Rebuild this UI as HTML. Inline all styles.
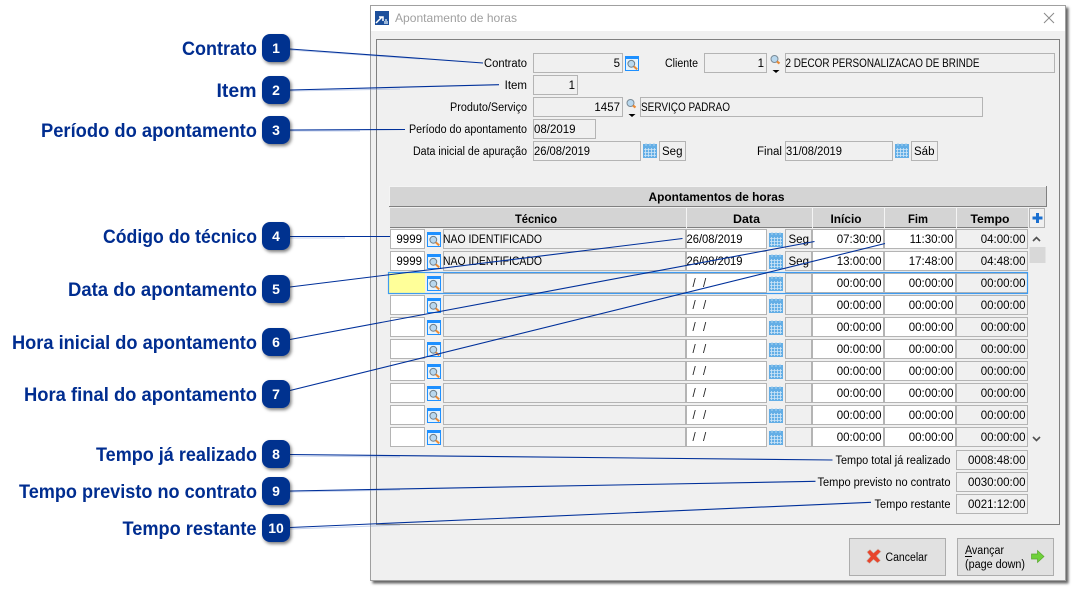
<!DOCTYPE html>
<html><head><meta charset="utf-8"><title>Apontamento de horas</title>
<style>
html,body{margin:0;padding:0;background:#fff;width:1078px;height:593px;overflow:hidden}
svg{display:block}
text{font-family:"Liberation Sans",sans-serif;font-size:11.5px;fill:#000}
.c{font-size:19.5px;font-weight:bold;fill:#002d90;text-anchor:end}
.n{font-size:14px;font-weight:bold;fill:#fff;text-anchor:middle}
.e{text-anchor:end}
.m{text-anchor:middle}
.h{font-weight:bold;text-anchor:middle}
.s{fill:#202020}
.f{fill:#f0f0f0;stroke:#b4b4b4}
.w{fill:#fff;stroke:#b4b4b4}
.l{stroke:#00309a;stroke-width:1.1;fill:none}
.b{fill:#00308f;filter:url(#sh)}
</style></head><body>
<svg width="1078" height="593" viewBox="0 0 1078 593" xmlns="http://www.w3.org/2000/svg">
<defs>
<filter id="sh" x="-30%" y="-30%" width="170%" height="170%"><feDropShadow dx="1.5" dy="2" stdDeviation="1.5" flood-color="#000" flood-opacity=".5"/></filter>
<filter id="ws" x="-2%" y="-2%" width="104%" height="104%"><feDropShadow dx="2.5" dy="2.5" stdDeviation="1.2" flood-color="#000" flood-opacity=".6"/></filter>
<g id="q"><rect x=".5" y=".5" width="13" height="14" fill="#e6f3fc" stroke="#1e90ff"/><rect x="0" y="0" width="14" height="3" fill="#1e90ff"/><circle cx="6.3" cy="7.8" r="3.4" fill="#b9d8ee" stroke="#6f7f8a"/><line x1="8.8" y1="10.4" x2="12.2" y2="13.4" stroke="#ea8a35" stroke-width="2"/></g>
<g id="k"><circle cx="4.5" cy="4" r="3.5" fill="#b9d8ee" stroke="#7a8a96"/><line x1="7" y1="6.5" x2="9.5" y2="8.5" stroke="#ea8a35" stroke-width="2.2"/><path d="M2.5 15h7l-3.5 3z" fill="#000"/></g>
<g id="d"><rect x="0" y="1" width="14" height="14" fill="#63aee6"/><rect x="0" y="1" width="14" height="3" fill="#63aee6"/><path d="M3 0v3M7 0v3M11 0v3" stroke="#a9d2ef"/><path d="M2.500 5v9M5.500 5v9M8.500 5v9M11.500 5v9M1 6.500h12M1 9.500h12M1 12.500h12" stroke="#cfe6f7" stroke-width=".8"/></g>
<g id="r">
<rect class="w" x="390.5" y=".5" width="34" height="19"/>
<use href="#q" x="427" y="3"/>
<rect class="f" x="443.5" y=".5" width="242" height="19"/>
<rect class="w" x="686.5" y=".5" width="80" height="19"/>
<use href="#d" x="769" y="3"/>
<rect class="f" x="785.5" y=".5" width="26" height="19"/>
<rect class="w" x="812.5" y=".5" width="71" height="19"/>
<rect class="w" x="884.5" y=".5" width="71" height="19"/>
<rect class="f" x="956.5" y=".5" width="71" height="19"/>
</g>
</defs>

<!-- window -->
<rect x="370.5" y="5.5" width="695" height="575" fill="#f0f0f0" stroke="#a0a0a0" filter="url(#ws)"/>
<rect x="371" y="6" width="694" height="25" fill="#fff"/>
<rect x="375" y="11" width="14" height="14" fill="#1c4f9c"/>
<path d="M376 23l6-6m-3 0h4v4" stroke="#fff" stroke-width="1.5" fill="none"/><path d="M384 24v-3h1v-2h2v2h1v3z" fill="#9db8d8"/>
<text x="395" y="22" style="font-size:12px;fill:#a0a0a0" textLength="122" lengthAdjust="spacingAndGlyphs">Apontamento de horas</text>
<path d="M1044 13l10 10M1054 13l-10 10" stroke="#8a8a8a" fill="none"/>

<!-- group -->
<rect x="376.5" y="39.5" width="683" height="485" fill="#f0f0f0" stroke="#808080"/>

<!-- form -->
<text class="e" x="527" y="67" textLength="43" lengthAdjust="spacingAndGlyphs">Contrato</text>
<rect class="f" x="533.5" y="53.5" width="89" height="19"/><text class="e" x="620" y="67">5</text>
<use href="#q" x="625" y="56"/>
<text x="665" y="67" textLength="33" lengthAdjust="spacingAndGlyphs">Cliente</text>
<rect class="f" x="704.5" y="53.5" width="62" height="19"/><text class="e" x="764" y="67">1</text>
<use href="#k" x="770" y="55"/>
<rect class="f" x="785.5" y="53.5" width="269" height="19"/><text x="785.5" y="67" textLength="194" lengthAdjust="spacingAndGlyphs">2 DECOR PERSONALIZACAO DE BRINDE</text>

<text class="e" x="527" y="89">Item</text>
<rect class="f" x="533.5" y="75.5" width="44" height="19"/><text class="e" x="575" y="89">1</text>

<text class="e" x="527" y="111" textLength="77" lengthAdjust="spacingAndGlyphs">Produto/Serviço</text>
<rect class="f" x="533.5" y="97.5" width="89" height="19"/><text class="e" x="620" y="111">1457</text>
<use href="#k" x="626" y="99"/>
<rect class="f" x="640.5" y="97.5" width="342" height="19"/><text x="641" y="111" textLength="89" lengthAdjust="spacingAndGlyphs">SERVIÇO PADRAO</text>

<text class="e" x="527" y="133" textLength="118" lengthAdjust="spacingAndGlyphs">Período do apontamento</text>
<rect class="f" x="533.5" y="119.5" width="62" height="19"/><text x="534" y="133">08/2019</text>

<text class="e" x="527" y="155" textLength="114" lengthAdjust="spacingAndGlyphs">Data inicial de apuração</text>
<rect class="f" x="533.5" y="141.5" width="107" height="19"/><text x="534" y="155" textLength="56" lengthAdjust="spacingAndGlyphs">26/08/2019</text>
<use href="#d" x="643" y="143"/>
<rect class="f" x="659.5" y="141.5" width="26" height="19"/><text x="662" y="155">Seg</text>
<text x="757" y="155">Final</text>
<rect class="f" x="785.5" y="141.5" width="107" height="19"/><text x="786" y="155" textLength="56" lengthAdjust="spacingAndGlyphs">31/08/2019</text>
<use href="#d" x="895" y="143"/>
<rect class="f" x="911.5" y="141.5" width="26" height="19"/><text x="914" y="155">Sáb</text>

<!-- table header -->
<rect x="389.5" y="186.5" width="657" height="20" fill="#d4d4d4" stroke="#808080"/>
<path d="M389.5 206V186.5H1046" stroke="#f4f4f4" fill="none"/>
<text class="h" x="716.5" y="201" textLength="136" lengthAdjust="spacingAndGlyphs">Apontamentos de horas</text>
<rect x="390" y="208" width="638" height="20" fill="#d4d4d4"/>
<line x1="390" y1="227.5" x2="1028" y2="227.5" stroke="#808080"/>
<path d="M686.5 208v20M812.5 208v20M884.5 208v20M956.5 208v20" stroke="#f4f4f4"/>
<text class="h" x="536" y="223" textLength="42" lengthAdjust="spacingAndGlyphs">Técnico</text>
<text class="h" x="746.5" y="223" textLength="27" lengthAdjust="spacingAndGlyphs">Data</text>
<text class="h" x="846" y="223" textLength="31" lengthAdjust="spacingAndGlyphs">Início</text>
<text class="h" x="918" y="223" textLength="20" lengthAdjust="spacingAndGlyphs">Fim</text>
<text class="h" x="990" y="223" textLength="39" lengthAdjust="spacingAndGlyphs">Tempo</text>
<rect x="1029.5" y="208.5" width="15" height="19" fill="#f0f0f0" stroke="#b4b4b4"/>
<path d="M1037.5 213v10M1032.5 218h10" stroke="#1a6fd0" stroke-width="3"/>
<path d="M1033 241l3.500-3.500 3.500 3.500" stroke="#505050" stroke-width="1.6" fill="none"/>
<rect x="1029.5" y="247" width="16" height="16" fill="#d8d8d8"/>
<path d="M1033 437l3.500 3.500 3.500-3.500" stroke="#505050" stroke-width="1.6" fill="none"/>

<!-- rows -->
<use href="#r" y="229"/><use href="#r" y="251"/><use href="#r" y="273"/><use href="#r" y="295"/><use href="#r" y="317"/>
<use href="#r" y="339"/><use href="#r" y="361"/><use href="#r" y="383"/><use href="#r" y="405"/><use href="#r" y="427"/>
<rect x="389" y="273" width="36" height="20" fill="#ffff99"/>
<rect x="388.5" y="272.5" width="639" height="21" fill="none" stroke="#3f9bf0" stroke-width="1.2"/>

<text class="e" x="422" y="243">9999</text><text x="443" y="243" textLength="99" lengthAdjust="spacingAndGlyphs">NAO IDENTIFICADO</text><text x="686.5" y="243" textLength="56" lengthAdjust="spacingAndGlyphs">26/08/2019</text><text x="788.5" y="243">Seg</text><text class="e" x="881.5" y="243">07:30:00</text><text class="e" x="953.5" y="243">11:30:00</text><text class="e" x="1025.5" y="243">04:00:00</text>
<text class="e" x="422" y="265">9999</text><text x="443" y="265" textLength="99" lengthAdjust="spacingAndGlyphs">NAO IDENTIFICADO</text><text x="686.5" y="265" textLength="56" lengthAdjust="spacingAndGlyphs">26/08/2019</text><text x="788.5" y="265">Seg</text><text class="e" x="881.5" y="265">13:00:00</text><text class="e" x="953.5" y="265">17:48:00</text><text class="e" x="1025.5" y="265">04:48:00</text>

<text class="s" x="692.5" y="287">/</text><text class="s" x="703" y="287">/</text><text class="e" x="881.5" y="287">00:00:00</text><text class="e" x="953.5" y="287">00:00:00</text><text class="e" x="1025.5" y="287">00:00:00</text>
<text class="s" x="692.5" y="309">/</text><text class="s" x="703" y="309">/</text><text class="e" x="881.5" y="309">00:00:00</text><text class="e" x="953.5" y="309">00:00:00</text><text class="e" x="1025.5" y="309">00:00:00</text>
<text class="s" x="692.5" y="331">/</text><text class="s" x="703" y="331">/</text><text class="e" x="881.5" y="331">00:00:00</text><text class="e" x="953.5" y="331">00:00:00</text><text class="e" x="1025.5" y="331">00:00:00</text>
<text class="s" x="692.5" y="353">/</text><text class="s" x="703" y="353">/</text><text class="e" x="881.5" y="353">00:00:00</text><text class="e" x="953.5" y="353">00:00:00</text><text class="e" x="1025.5" y="353">00:00:00</text>
<text class="s" x="692.5" y="375">/</text><text class="s" x="703" y="375">/</text><text class="e" x="881.5" y="375">00:00:00</text><text class="e" x="953.5" y="375">00:00:00</text><text class="e" x="1025.5" y="375">00:00:00</text>
<text class="s" x="692.5" y="397">/</text><text class="s" x="703" y="397">/</text><text class="e" x="881.5" y="397">00:00:00</text><text class="e" x="953.5" y="397">00:00:00</text><text class="e" x="1025.5" y="397">00:00:00</text>
<text class="s" x="692.5" y="419">/</text><text class="s" x="703" y="419">/</text><text class="e" x="881.5" y="419">00:00:00</text><text class="e" x="953.5" y="419">00:00:00</text><text class="e" x="1025.5" y="419">00:00:00</text>
<text class="s" x="692.5" y="441">/</text><text class="s" x="703" y="441">/</text><text class="e" x="881.5" y="441">00:00:00</text><text class="e" x="953.5" y="441">00:00:00</text><text class="e" x="1025.5" y="441">00:00:00</text>

<!-- totals -->
<text class="e" x="950.5" y="464" textLength="115" lengthAdjust="spacingAndGlyphs">Tempo total já realizado</text>
<rect class="f" x="956.5" y="450.5" width="71" height="19"/><text class="e" x="1025.5" y="464">0008:48:00</text>
<text class="e" x="950.5" y="486" textLength="133" lengthAdjust="spacingAndGlyphs">Tempo previsto no contrato</text>
<rect class="f" x="956.5" y="472.5" width="71" height="19"/><text class="e" x="1025.5" y="486">0030:00:00</text>
<text class="e" x="950.5" y="508" textLength="76" lengthAdjust="spacingAndGlyphs">Tempo restante</text>
<rect class="f" x="956.5" y="494.5" width="71" height="19"/><text class="e" x="1025.5" y="508">0021:12:00</text>

<!-- buttons -->
<rect x="849.5" y="538.5" width="96" height="37" fill="#e1e1e1" stroke="#adadad"/>
<path d="M867 552l3-2.500 3.500 3.500 4.500-4 3 2.500-4.500 4.500 4 4.500-3 2.500-4-3.500-4 4-3-2.500 4-4.500z" fill="#e8452c" stroke="#c9c0b8" stroke-width=".6"/>
<text x="885.5" y="561" textLength="42" lengthAdjust="spacingAndGlyphs">Cancelar</text>
<rect x="957.5" y="538.5" width="96" height="37" fill="#e1e1e1" stroke="#adadad"/>
<text x="965" y="554" textLength="39" lengthAdjust="spacingAndGlyphs">Avançar</text><line x1="965" y1="556.5" x2="972" y2="556.5" stroke="#000"/>
<text x="965" y="568" textLength="60" lengthAdjust="spacingAndGlyphs">(page down)</text>
<path d="M1031.500 554h6v-3.500l6.500 6-6.500 6v-3.500h-6z" fill="#6fd13a" stroke="#5aa830" stroke-width=".7"/>

<!-- leader lines -->
<g class="l" opacity=".4" style="stroke:#6f8fd0">
<line x1="290" y1="50" x2="420" y2="59"/><line x1="290" y1="91" x2="400" y2="89"/><line x1="290" y1="131" x2="360" y2="131"/><line x1="290" y1="238" x2="345" y2="238"/><line x1="290" y1="456" x2="400" y2="457"/><line x1="290" y1="492" x2="400" y2="490"/><line x1="290" y1="529" x2="400" y2="525"/>
</g>
<g class="l">
<line x1="290" y1="49" x2="483" y2="63"/>
<line x1="290" y1="90" x2="499" y2="84.7"/>
<line x1="290" y1="130" x2="405" y2="129.5"/>
<line x1="290" y1="236.5" x2="390" y2="236.5"/>
<line x1="290" y1="287" x2="682.5" y2="238.5"/>
<line x1="290" y1="339.5" x2="814.5" y2="241.5"/>
<line x1="290" y1="390.5" x2="885" y2="243.5"/>
<line x1="290" y1="454.5" x2="832.5" y2="460"/>
<line x1="290" y1="491" x2="815.5" y2="481.3"/>
<line x1="290" y1="527.5" x2="871" y2="502.3"/>
</g>

<!-- callouts -->
<text class="c" x="257" y="55" textLength="75" lengthAdjust="spacingAndGlyphs">Contrato</text>
<rect class="b" x="262" y="34" width="28" height="28" rx="8"/><text class="n" x="276" y="53">1</text>
<text class="c" x="256.5" y="97" textLength="40" lengthAdjust="spacingAndGlyphs">Item</text>
<rect class="b" x="262" y="76" width="28" height="28" rx="8"/><text class="n" x="276" y="95">2</text>
<text class="c" x="257" y="137" textLength="216" lengthAdjust="spacingAndGlyphs">Período do apontamento</text>
<rect class="b" x="262" y="116" width="28" height="28" rx="8"/><text class="n" x="276" y="135">3</text>
<text class="c" x="257" y="243" textLength="154" lengthAdjust="spacingAndGlyphs">Código do técnico</text>
<rect class="b" x="262" y="222" width="28" height="28" rx="8"/><text class="n" x="276" y="241">4</text>
<text class="c" x="257" y="296" textLength="189" lengthAdjust="spacingAndGlyphs">Data do apontamento</text>
<rect class="b" x="262" y="275" width="28" height="28" rx="8"/><text class="n" x="276" y="294">5</text>
<text class="c" x="257" y="349" textLength="245" lengthAdjust="spacingAndGlyphs">Hora inicial do apontamento</text>
<rect class="b" x="262" y="328" width="28" height="28" rx="8"/><text class="n" x="276" y="347">6</text>
<text class="c" x="257" y="401" textLength="233" lengthAdjust="spacingAndGlyphs">Hora final do apontamento</text>
<rect class="b" x="262" y="380" width="28" height="28" rx="8"/><text class="n" x="276" y="399">7</text>
<text class="c" x="257" y="461" textLength="161" lengthAdjust="spacingAndGlyphs">Tempo já realizado</text>
<rect class="b" x="262" y="440" width="28" height="28" rx="8"/><text class="n" x="276" y="459">8</text>
<text class="c" x="257" y="498" textLength="238" lengthAdjust="spacingAndGlyphs">Tempo previsto no contrato</text>
<rect class="b" x="262" y="477" width="28" height="28" rx="8"/><text class="n" x="276" y="496">9</text>
<text class="c" x="256.5" y="535" textLength="134" lengthAdjust="spacingAndGlyphs">Tempo restante</text>
<rect class="b" x="262" y="514" width="28" height="28" rx="8"/><text class="n" x="276" y="533">10</text>
</svg>
</body></html>
